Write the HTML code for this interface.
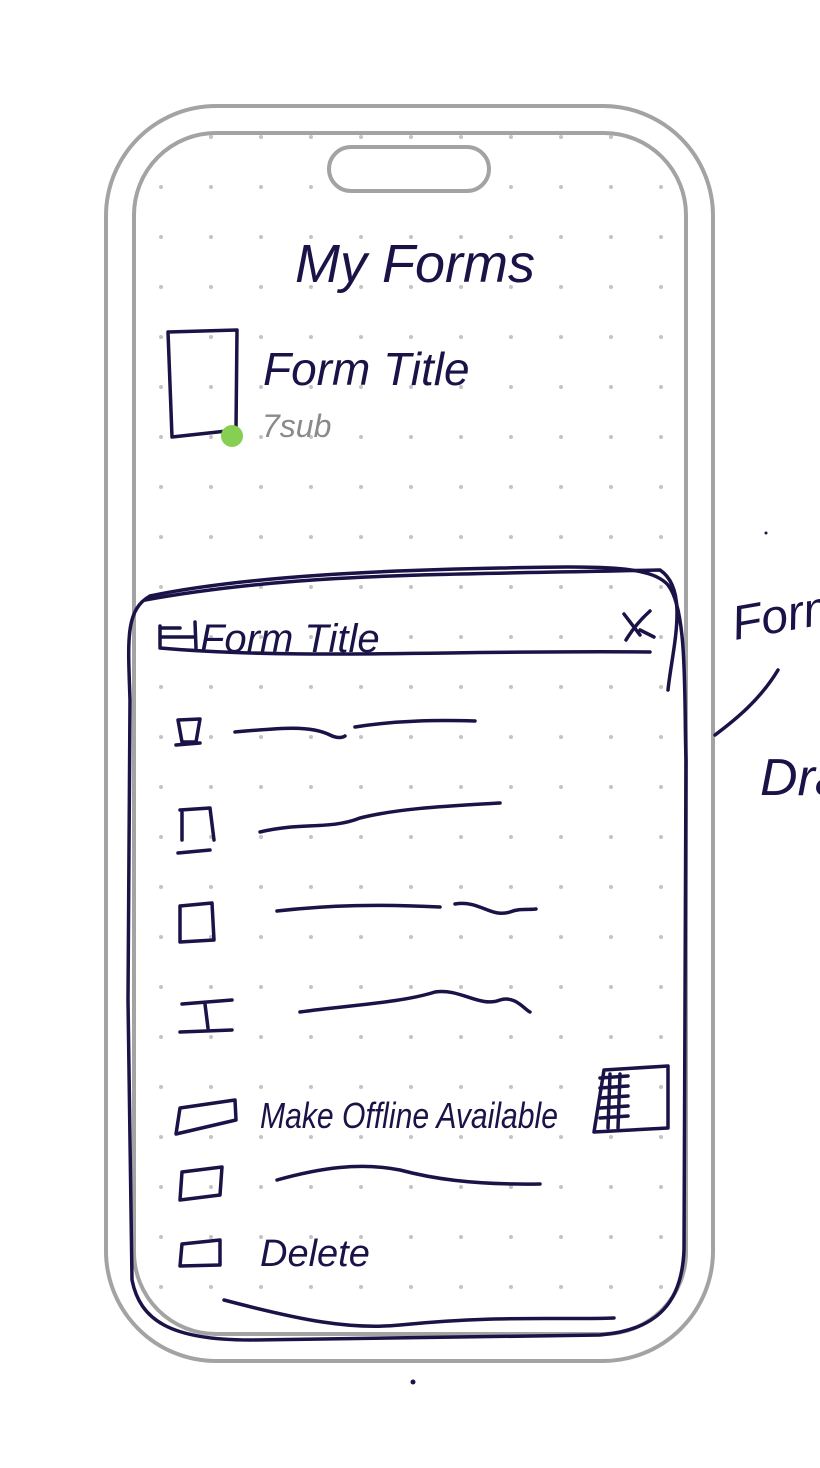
<!DOCTYPE html>
<html><head><meta charset="utf-8"><style>
html,body{margin:0;padding:0;background:#fff;width:820px;height:1468px;overflow:hidden}
svg{display:block}
text{font-family:"Liberation Sans",sans-serif;font-style:italic;fill:#1a1347}
</style></head><body>
<svg width="820" height="1468" viewBox="0 0 820 1468" xmlns="http://www.w3.org/2000/svg">
<defs>
<pattern id="dots" x="136" y="112" width="50" height="50" patternUnits="userSpaceOnUse">
<circle cx="25" cy="25" r="2" fill="#c4c4c4"/>
</pattern>
<clipPath id="scr"><rect x="134" y="133" width="552" height="1201" rx="82"/></clipPath>
</defs>
<rect x="134" y="133" width="552" height="1201" rx="82" fill="url(#dots)"/>
<rect x="106" y="106" width="607" height="1255" rx="110" fill="none" stroke="#a3a3a3" stroke-width="4"/>
<rect x="134" y="133" width="552" height="1201" rx="82" fill="none" stroke="#a3a3a3" stroke-width="4"/>
<rect x="329" y="147" width="160" height="44" rx="22" fill="#fff" stroke="#a3a3a3" stroke-width="4"/>

<g fill="none" stroke="#1a1347" stroke-width="3.5" stroke-linecap="round" stroke-linejoin="round">
<!-- form icon -->
<path d="M168 332 L237 330 L236 430 L172 437 L168 332 Z"/>
<!-- modal outline -->
<path d="M150 596 C250 575 400 570 500 568 C600 566 650 565 668 585 C688 610 684 700 686 760 L684 1250 C682 1300 660 1330 600 1335 L250 1340 C170 1340 140 1320 132 1280 L128 1000 L130 700 C128 640 125 610 150 596"/>
<path d="M145 600 C300 572 450 575 660 570 C690 590 672 650 668 690"/>
<path d="M224 1300 C300 1320 350 1330 400 1325 C500 1315 560 1320 614 1318"/>
<!-- header -->
<path d="M160 648 C300 660 450 650 650 652"/>
<path d="M160 626 L160 646 M160 628 L180 628 M160 637 L195 637 M195 622 L196 648"/>
<path d="M624 614 L640 635 M650 611 C640 620 632 630 626 640 M640 630 L654 637"/>
<!-- rows -->
<path d="M178 720 L200 719 L196 742 L182 742 Z M176 745 L200 743"/>
<path d="M235 732 C280 728 310 725 330 735 C340 740 345 736 345 736 M355 727 C400 720 440 720 475 721"/>
<path d="M180 810 L210 808 L214 840 M182 812 L182 840 M178 853 L210 850"/>
<path d="M260 832 C300 822 330 830 360 818 C400 808 450 806 500 803"/>
<path d="M180 906 L212 903 L214 940 L180 942 Z"/>
<path d="M277 911 C330 905 380 904 440 907 M455 904 C480 900 490 918 510 912 C520 908 530 910 536 909"/>
<path d="M182 1004 L232 1000 M205 1004 L208 1028 M180 1032 L232 1030"/>
<path d="M300 1012 C350 1005 400 1003 435 992 C460 988 480 1008 500 1000 C515 995 525 1010 530 1012"/>
<path d="M180 1108 L235 1100 L236 1120 L176 1134 Z"/>
<path d="M604 1070 L668 1066 L668 1128 L594 1132 Z M600 1078 L628 1076 M600 1088 L628 1086 M600 1098 L628 1096 M600 1108 L628 1106 M600 1118 L628 1116 M610 1074 L608 1128 M620 1074 L618 1128"/>
<path d="M182 1172 L222 1167 L220 1195 L180 1200 Z"/>
<path d="M277 1180 C320 1168 360 1162 400 1170 C430 1178 470 1185 540 1184"/>
<path d="M182 1244 L220 1240 L220 1265 L180 1266 Z"/>
<!-- margin -->
<path d="M778 670 C760 700 735 720 715 735"/>
</g>
<circle cx="232" cy="436" r="11" fill="#86cf52"/>
<circle cx="413" cy="1382" r="2.5" fill="#1a1347"/>
<circle cx="766" cy="533" r="1.5" fill="#1a1347"/>

<text x="295" y="282" font-size="54">My Forms</text>
<text x="263" y="385" font-size="46">Form Title</text>
<text x="262" y="437" font-size="32" style="fill:#8a8a8a">7sub</text>
<text x="200" y="652" font-size="40">Form Title</text>
<text x="260" y="1128" font-size="36" textLength="298" lengthAdjust="spacingAndGlyphs">Make Offline Available</text>
<text x="260" y="1266" font-size="38">Delete</text>
<text x="735" y="640" font-size="48" transform="rotate(-10 735 640)">Form</text>
<text x="760" y="795" font-size="52">Dra</text>
</svg>
</body></html>
